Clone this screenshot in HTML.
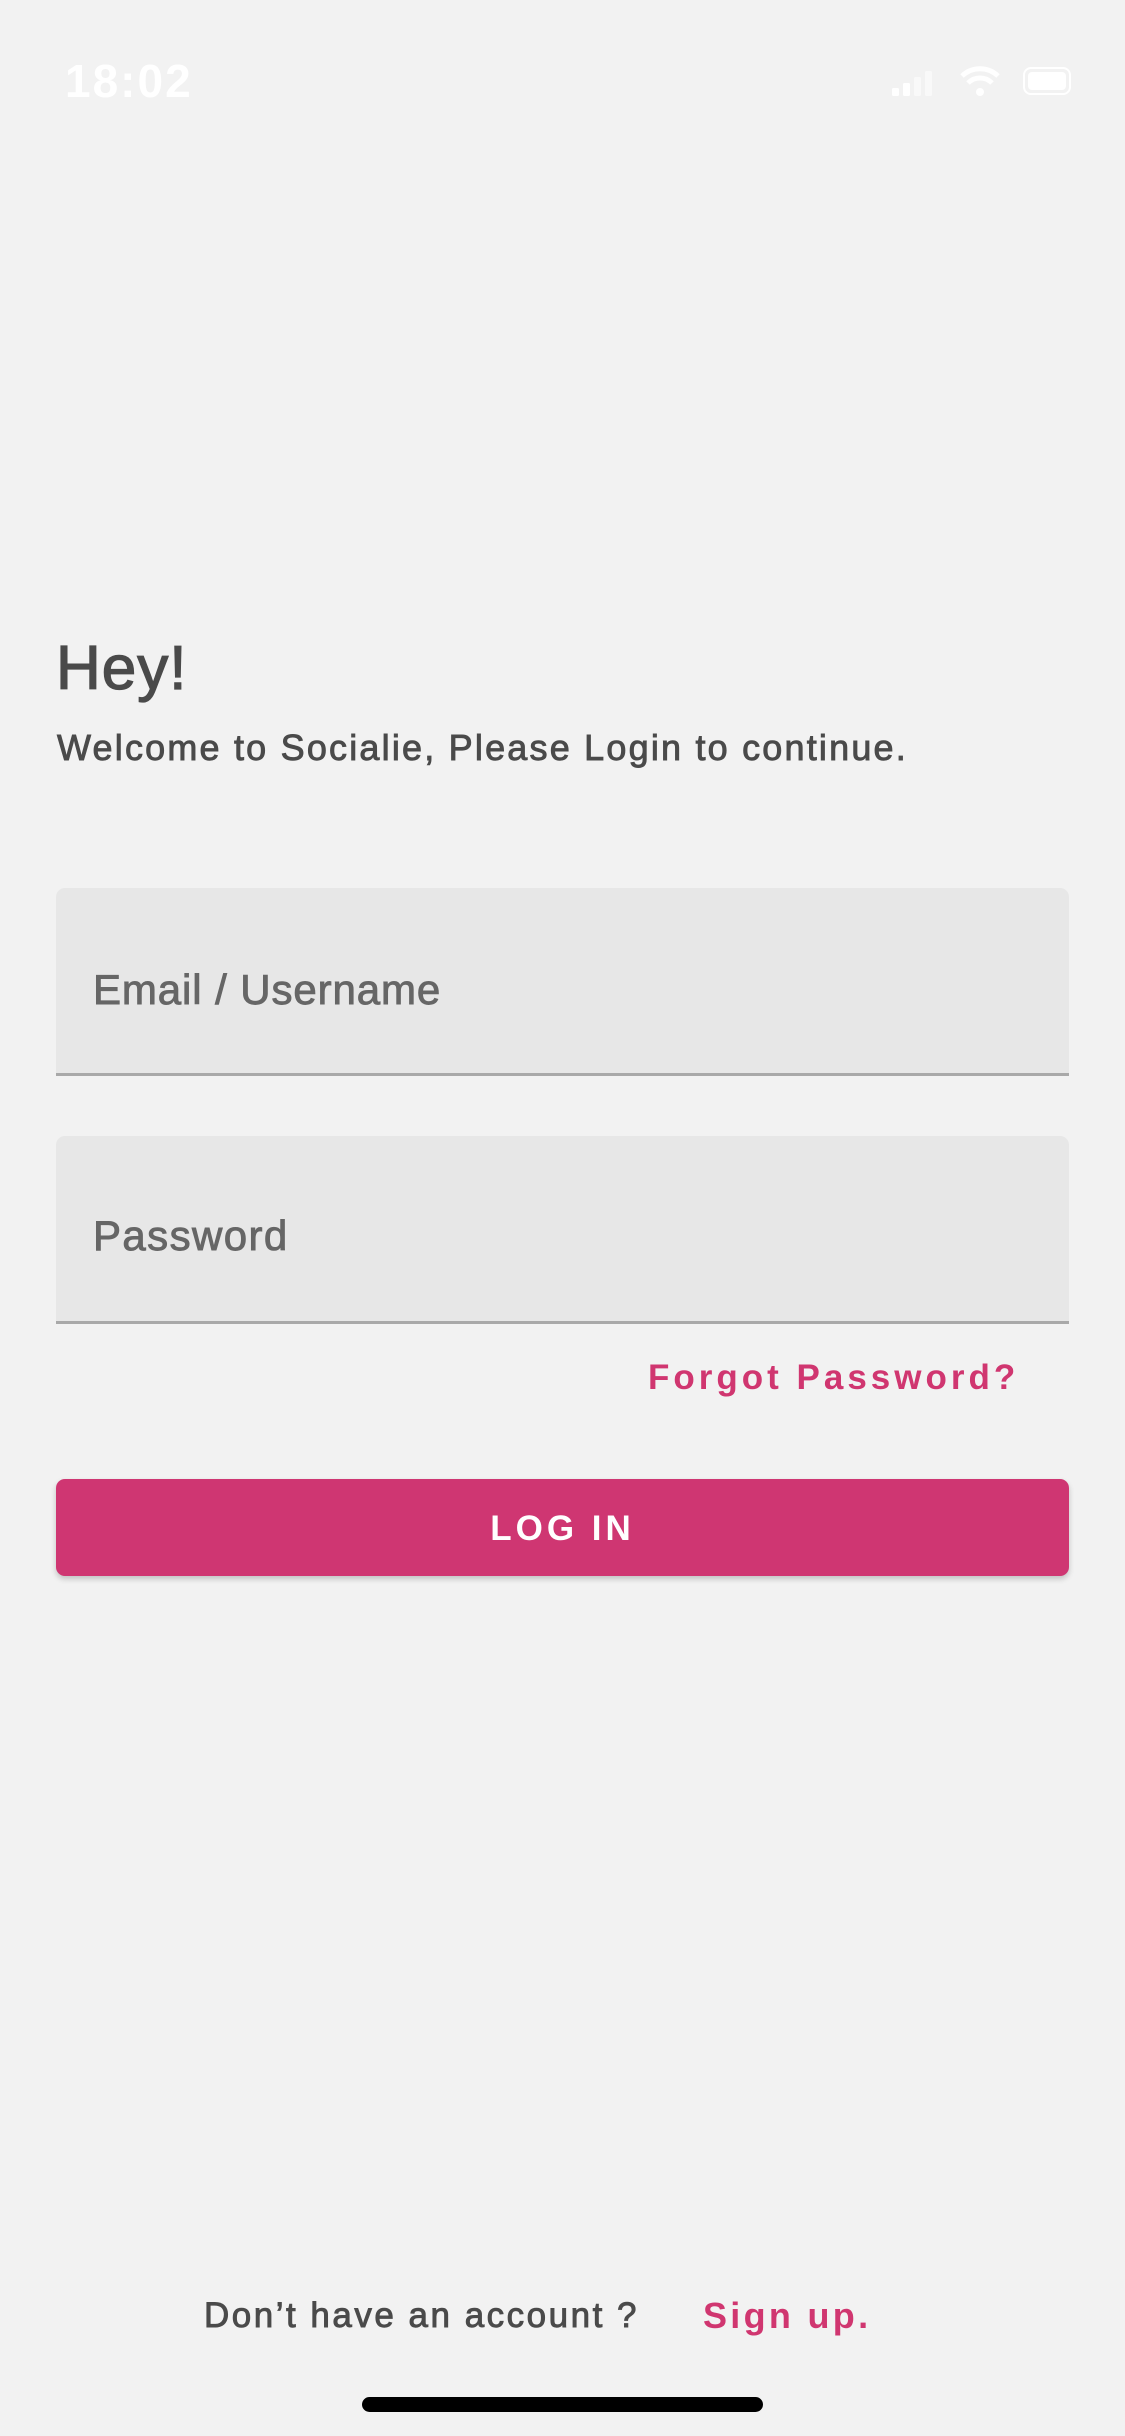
<!DOCTYPE html>
<html><head><meta charset="utf-8"><style>
*{margin:0;padding:0;box-sizing:border-box}
body{width:1125px;height:2436px;background:#f2f2f2;font-family:"Liberation Sans",sans-serif;position:relative;overflow:hidden}
.a{position:absolute;white-space:nowrap}
.m{-webkit-text-stroke:0.9px currentColor}
</style></head><body>
<div class="a" style="left:65px;top:54px;font-size:46px;font-weight:bold;color:#fff;letter-spacing:2px">18:02</div>
<svg class="a" style="left:890px;top:62px" width="200" height="40">
<rect x="2" y="26" width="7" height="8" rx="1.5" fill="#fff"/><rect x="13" y="21" width="7" height="13" rx="1.5" fill="#fff"/><rect x="24" y="15" width="7" height="19" rx="1.5" fill="#fff" opacity=".5"/><rect x="35" y="9" width="7" height="25" rx="1.5" fill="#fff" opacity=".5"/>
<path d="M72 14 a26 26 0 0 1 36 0 M78 21 a17 17 0 0 1 24 0" stroke="#fff" stroke-width="5" fill="none"/><circle cx="90" cy="30" r="4" fill="#fff"/>
<rect x="134" y="6" width="46" height="26" rx="7" stroke="#fff" stroke-width="2" fill="none"/><rect x="138" y="10" width="38" height="18" rx="4" fill="#fff"/>
</svg>
<div class="a m" style="left:56px;top:633px;font-size:62px;color:#4a4a4a;letter-spacing:1px;-webkit-text-stroke:1.3px #4a4a4a">Hey!</div>
<div class="a m" style="left:57px;top:727px;font-size:36px;color:#4a4a4a;letter-spacing:2.2px">Welcome to Socialie, Please Login to continue.</div>
<div class="a" style="left:56px;top:888px;width:1013px;height:188px;background:#e7e7e7;border-radius:9px 9px 0 0;border-bottom:3px solid #a9a9a9"></div>
<div class="a m" style="left:93px;top:966px;font-size:42px;color:#666;letter-spacing:0.9px">Email / Username</div>
<div class="a" style="left:56px;top:1136px;width:1013px;height:188px;background:#e7e7e7;border-radius:9px 9px 0 0;border-bottom:3px solid #a9a9a9"></div>
<div class="a m" style="left:93px;top:1212px;font-size:42px;color:#666;letter-spacing:1.4px">Password</div>
<div class="a" style="left:648px;top:1358px;font-size:35px;font-weight:bold;color:#d03670;letter-spacing:4px">Forgot Password?</div>
<div class="a" style="left:56px;top:1479px;width:1013px;height:97px;background:#cf3672;border-radius:9px;box-shadow:0 3px 6px rgba(0,0,0,.2)"></div>
<div class="a" style="left:0;width:1125px;text-align:center;top:1509px;font-size:35px;font-weight:bold;color:#fff;letter-spacing:4px">LOG IN</div>
<div class="a m" style="left:204px;top:2296px;font-size:35px;color:#4a4a4a;letter-spacing:2.5px">Don’t have an account ?</div>
<div class="a" style="left:703px;top:2295px;font-size:36px;font-weight:bold;color:#d03670;letter-spacing:3.3px">Sign up.</div>
<div class="a" style="left:362px;top:2397px;width:401px;height:15px;background:#000;border-radius:8px"></div>
</body></html>
